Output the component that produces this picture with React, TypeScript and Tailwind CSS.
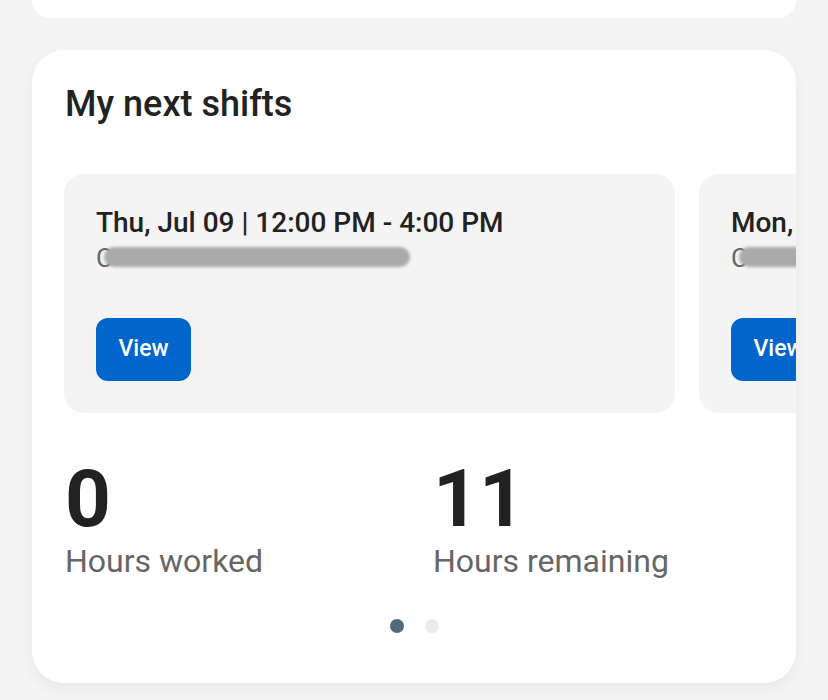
import React from 'react';

interface Shift {
  id: number;
  label: string;
}

const shifts: Shift[] = [
  { id: 1, label: 'Thu, Jul 09 | 12:00 PM - 4:00 PM' },
  { id: 2, label: 'Mon, Jul 13 | 9:00 AM - 1:00 PM' },
];

const ShiftCard = ({ shift }: { shift: Shift }) => (
  <div className="w-[611px] h-[239px] shrink-0 rounded-[20px] bg-[#f4f4f4] px-8 pt-[32px]">
    <div className="text-[28px] leading-[34px] font-medium text-[#222] whitespace-nowrap">{shift.label}</div>
    {/* address is scribbled over */}
    <div className="relative h-[30px] mt-[1px]">
      <span className="absolute left-0 top-[2px] text-[26px] leading-[30px] text-[#666]">C</span>
      <div className="absolute left-[8px] top-[6px] h-[20px] w-[306px] rounded-full bg-[#aaa] blur-[1.5px]" />
    </div>
    <button className="mt-[47px] h-[63px] w-[95px] rounded-[12px] bg-[#0066cc] text-white text-[23px] font-medium">
      View
    </button>
  </div>
);

const App = () => {
  return (
    <div className="w-[828px] h-[700px] overflow-hidden bg-[#f4f4f4] px-8 font-['Roboto',sans-serif]">
      {/* previous card, scrolled mostly out of view */}
      <div className="h-[18px] rounded-b-[28px] bg-white" />

      <div className="mt-8 h-[633px] rounded-[32px] bg-white overflow-hidden shadow-[0_6px_14px_rgba(0,0,0,0.05)]">
        <h2 className="pt-[33px] pl-[33px] text-[36px] leading-[42px] font-medium text-[#222]">My next shifts</h2>

        <div className="mt-[49px] pl-8 flex gap-6">
          {shifts.map((s) => (
            <ShiftCard key={s.id} shift={s} />
          ))}
        </div>

        <div className="mt-[44px] px-[33px] grid grid-cols-[368px_1fr]">
          <div>
            <div className="text-[80px] leading-[84px] font-bold text-[#222]">0</div>
            <div className="text-[32px] leading-[40px] text-[#666]">Hours worked</div>
          </div>
          <div>
            <div className="text-[80px] leading-[84px] font-bold text-[#222]">11</div>
            <div className="text-[32px] leading-[40px] text-[#666]">Hours remaining</div>
          </div>
        </div>

        <div className="mt-[38px] flex justify-center gap-[21px]">
          <span className="w-[14px] h-[14px] rounded-full bg-[#4f6b7a]" />
          <span className="w-[14px] h-[14px] rounded-full bg-[#e8ebef]" />
        </div>
      </div>
    </div>
  );
};

export default App;
